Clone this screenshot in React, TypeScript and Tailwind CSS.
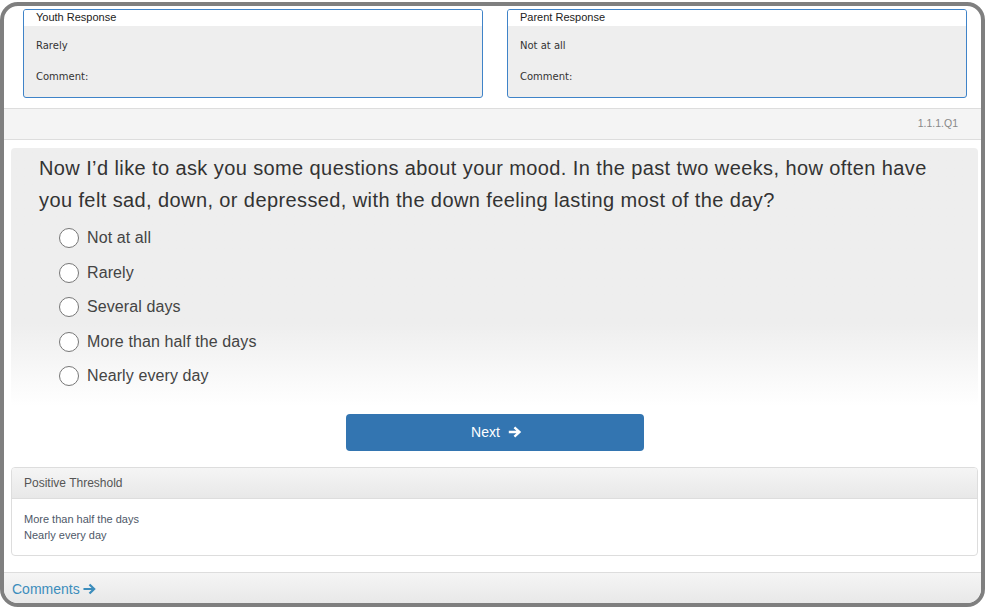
import React from "react";

const options = [
  "Not at all",
  "Rarely",
  "Several days",
  "More than half the days",
  "Nearly every day",
];

function ResponseBox({ title, answer }: { title: string; answer: string }) {
  return (
    <div className="w-[460px] h-[89px] border border-[#3f83c8] rounded-[3px] overflow-hidden bg-[#eeeeee]">
      <div className="h-[16px] bg-white px-[12px] text-[11px] leading-[15px] text-[#222] font-['Liberation_Sans',sans-serif]">
        {title}
      </div>
      <div className="px-[12px] font-['DejaVu_Sans',sans-serif] text-[10px] text-[#333]">
        <div className="mt-[14px] leading-[12px]">{answer}</div>
        <div className="mt-[19px] leading-[12px]">Comment:</div>
      </div>
    </div>
  );
}

function BoldArrow({ className }: { className?: string }) {
  return (
    <svg viewBox="0 0 14 12" className={className} fill="currentColor">
      <path d="M7.2 0.6 L13.2 6 L7.2 11.4 L5.6 9.8 L8.4 7.2 H0.8 V4.8 H8.4 L5.6 2.2 Z" />
    </svg>
  );
}

function ThinArrow({ className }: { className?: string }) {
  return (
    <svg viewBox="0 0 14 12" className={className} fill="none" stroke="currentColor" strokeWidth="2.4">
      <path d="M0.5 6 H12 M7 1.2 L12 6 L7 10.8" />
    </svg>
  );
}

export default function App() {
  return (
    <div className="w-[989px] h-[610px] bg-white font-['Liberation_Sans',Arial,sans-serif]">
      <div className="mt-[2px] w-[985px] h-[605px] border-4 border-[#7f7f7f] rounded-[18px] overflow-hidden bg-white flex flex-col">
        <div className="flex gap-[24px] pl-[19px] pt-[3px]">
          <ResponseBox title="Youth Response" answer="Rarely" />
          <ResponseBox title="Parent Response" answer="Not at all" />
        </div>

        <div className="mt-[10px] h-[32px] border-y border-[#dddddd] bg-[#f4f4f4] flex items-center justify-end pr-[23px] text-[10.5px] text-[#888]">
          1.1.1.Q1
        </div>

        <div className="mt-[8px] ml-[7px] w-[967px] rounded-[4px] bg-linear-to-b from-[#eeeeee] via-[#eeeeee] via-68% to-white pl-[28px] pt-[4px] pb-[12px]">
          <p className="text-[20px] leading-[32px] tracking-[0.4px] text-[#333]">
            Now I’d like to ask you some questions about your mood. In the past two weeks, how often have
            <br />
            you felt sad, down, or depressed, with the down feeling lasting most of the day?
          </p>
          <div className="mt-[5px] flex flex-col">
            {options.map((o) => (
              <label key={o} className="h-[34.5px] flex items-center pl-[20px]">
                <span className="w-[20px] h-[20px] rounded-full border border-[#777] bg-white shrink-0" />
                <span className="ml-[8px] text-[16px] tracking-[0.1px] text-[#444]">{o}</span>
              </label>
            ))}
          </div>
        </div>

        <div className="mt-[8px] flex justify-center pl-[4px]">
          <button className="w-[298px] h-[37px] bg-[#3375b1] rounded-[4px] text-white text-[14px] flex items-center justify-center gap-[8px] pl-[4px]">
            Next
            <BoldArrow className="w-[14px] h-[12px]" />
          </button>
        </div>

        <div className="mt-[16px] ml-[7px] w-[967px] h-[89px] border border-[#dddddd] rounded-[4px] overflow-hidden">
          <div className="h-[31px] bg-linear-to-b from-[#f5f5f5] to-[#e8e8e8] border-b border-[#dddddd] flex items-center pl-[12px] text-[12px] text-[#555]">
            Positive Threshold
          </div>
          <div className="bg-white pl-[12px] pt-[12px] text-[11px] leading-[16px] text-[#4e5868]">
            <div>More than half the days</div>
            <div>Nearly every day</div>
          </div>
        </div>

        <div className="mt-[16px] flex-1 border-t border-[#dddddd] bg-linear-to-b from-[#f5f5f5] to-[#e8e8e8] flex items-center pl-[8px] pt-[3px] text-[14px] text-[#3c8dbc] gap-[3px]">
          Comments
          <ThinArrow className="w-[13px] h-[12px]" />
        </div>
      </div>
    </div>
  );
}
